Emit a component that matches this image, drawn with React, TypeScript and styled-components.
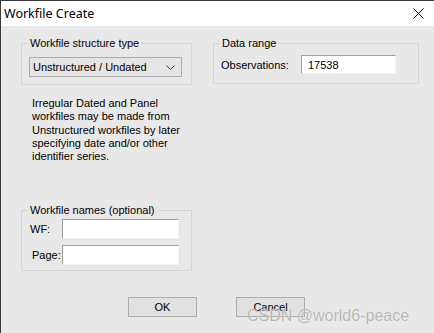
import React from 'react';
import styled, {createGlobalStyle} from 'styled-components';

const GlobalStyle = createGlobalStyle`
  html, body {
    margin: 0;
    padding: 0;
    background: #e8e8e8;
  }
`;

const Window = styled.div`
  position: relative;
  display: flex;
  flex-direction: column;
  width: 434px;
  height: 333px;
  box-sizing: border-box;
  border-top: 1px solid #3a3a3a;
  border-left: 1px solid #3a3a3a;
  background: #e8e8e8;
  font-family: 'Liberation Sans', Arial, sans-serif;
  font-size: 11px;
  color: #000;
  overflow: hidden;
`;

const TitleBar = styled.div`
  display: flex;
  align-items: center;
  justify-content: space-between;
  height: 25px;
  padding: 0 10px 0 3px;
  background: #fff;
`;

const Title = styled.span`
  font-family: 'Noto Sans', 'Open Sans', sans-serif;
  font-size: 12.5px;
  color: #000;
`;

const Body = styled.div`
  display: flex;
  flex-direction: column;
  padding: 11px 0 0 20px;
`;

const Columns = styled.div`
  display: flex;
  align-items: flex-start;
  gap: 21px;
`;

const Column = styled.div<{$width: number}>`
  display: flex;
  flex-direction: column;
  width: ${({$width}) => $width}px;
`;

const Group = styled.fieldset<{$pt: number; $pb: number}>`
  margin: 0;
  min-width: 0;
  padding: ${({$pt}) => $pt}px 8px ${({$pb}) => $pb}px 7px;
  border: 1px solid #d5d5d5;
`;

const Legend = styled.legend`
  padding: 0 2px;
  margin-left: -1px;
  line-height: 13px;
  font-size: 11px;
`;

const Combo = styled.div`
  display: flex;
  align-items: center;
  justify-content: space-between;
  box-sizing: border-box;
  width: 153px;
  height: 20px;
  padding: 0 6px 0 3px;
  border: 1px solid #adadad;
  background: #e5e5e5;
`;

const Note = styled.p`
  margin: 12px 0 0 11px;
  line-height: 13.3px;
`;

const FieldRow = styled.div<{$gap?: number}>`
  display: flex;
  align-items: center;
  margin-top: ${({$gap}) => $gap ?? 0}px;
`;

const FieldLabel = styled.span<{$width: number; $indent?: number}>`
  width: ${({$width}) => $width}px;
  padding-left: ${({$indent}) => $indent ?? 0}px;
  box-sizing: border-box;
`;

const TextBox = styled.div<{$width: number; $height: number}>`
  box-sizing: border-box;
  width: ${({$width}) => $width}px;
  height: ${({$height}) => $height}px;
  padding: 0 6px;
  display: flex;
  align-items: center;
  background: #fff;
  border-top: 1px solid #a0a0a0;
  border-left: 1px solid #a0a0a0;
  border-right: 1px solid #f4f4f4;
  border-bottom: 1px solid #f4f4f4;
`;

const ButtonRow = styled.div`
  display: flex;
  gap: 39px;
  margin: 26px 0 0 107px;
`;

const Button = styled.button`
  box-sizing: border-box;
  width: 69px;
  height: 20px;
  padding: 0;
  border: 1px solid #adadad;
  background: #e1e1e1;
  font-family: 'Liberation Sans', Arial, sans-serif;
  font-size: 11px;
  color: #000;
`;

const Watermark = styled.span`
  position: absolute;
  left: 246px;
  top: 306px;
  font-family: 'Liberation Sans', Arial, sans-serif;
  font-size: 16px;
  line-height: 18px;
  color: rgba(170, 170, 170, 0.85);
  text-shadow: 0 0 1px rgba(255, 255, 255, 0.9);
  pointer-events: none;
`;

const CloseIcon = () => (
  <svg width="11" height="11" viewBox="0 0 11 11">
    <path d="M0.5 0.5 L10.5 10.5 M10.5 0.5 L0.5 10.5" stroke="#000" strokeWidth="1" />
  </svg>
);

const Chevron = () => (
  <svg width="9" height="5" viewBox="0 0 9 5">
    <path d="M0.5 0.5 L4.5 4.5 L8.5 0.5" stroke="#444" strokeWidth="1" fill="none" />
  </svg>
);

const App = () => {
  return (
    <>
      <GlobalStyle />
      <Window>
        <TitleBar>
          <Title>Workfile Create</Title>
          <CloseIcon />
        </TitleBar>
        <Body>
          <Columns>
            <Column $width={171}>
              <Group $pt={7} $pb={7}>
                <Legend>Workfile structure type</Legend>
                <Combo>
                  <span>Unstructured / Undated</span>
                  <Chevron />
                </Combo>
              </Group>
              <Note>
                Irregular Dated and Panel
                <br />
                workfiles may be made from
                <br />
                Unstructured workfiles by later
                <br />
                specifying date and/or other
                <br />
                identifier series.
              </Note>
              <Group $pt={2} $pb={5} style={{marginTop: 41}}>
                <Legend>Workfile names (optional)</Legend>
                <FieldRow>
                  <FieldLabel $width={33} $indent={1}>WF:</FieldLabel>
                  <TextBox $width={117} $height={20} />
                </FieldRow>
                <FieldRow $gap={6}>
                  <FieldLabel $width={33} $indent={3}>Page:</FieldLabel>
                  <TextBox $width={117} $height={20} />
                </FieldRow>
              </Group>
            </Column>
            <Column $width={206}>
              <Group $pt={5} $pb={9}>
                <Legend>Data range</Legend>
                <FieldRow>
                  <FieldLabel $width={80}>Observations:</FieldLabel>
                  <TextBox $width={95} $height={19}>17538</TextBox>
                </FieldRow>
              </Group>
            </Column>
          </Columns>
          <ButtonRow>
            <Button>OK</Button>
            <Button>Cancel</Button>
          </ButtonRow>
        </Body>
        <Watermark>CSDN @world6-peace</Watermark>
      </Window>
    </>
  );
};

export default App;
